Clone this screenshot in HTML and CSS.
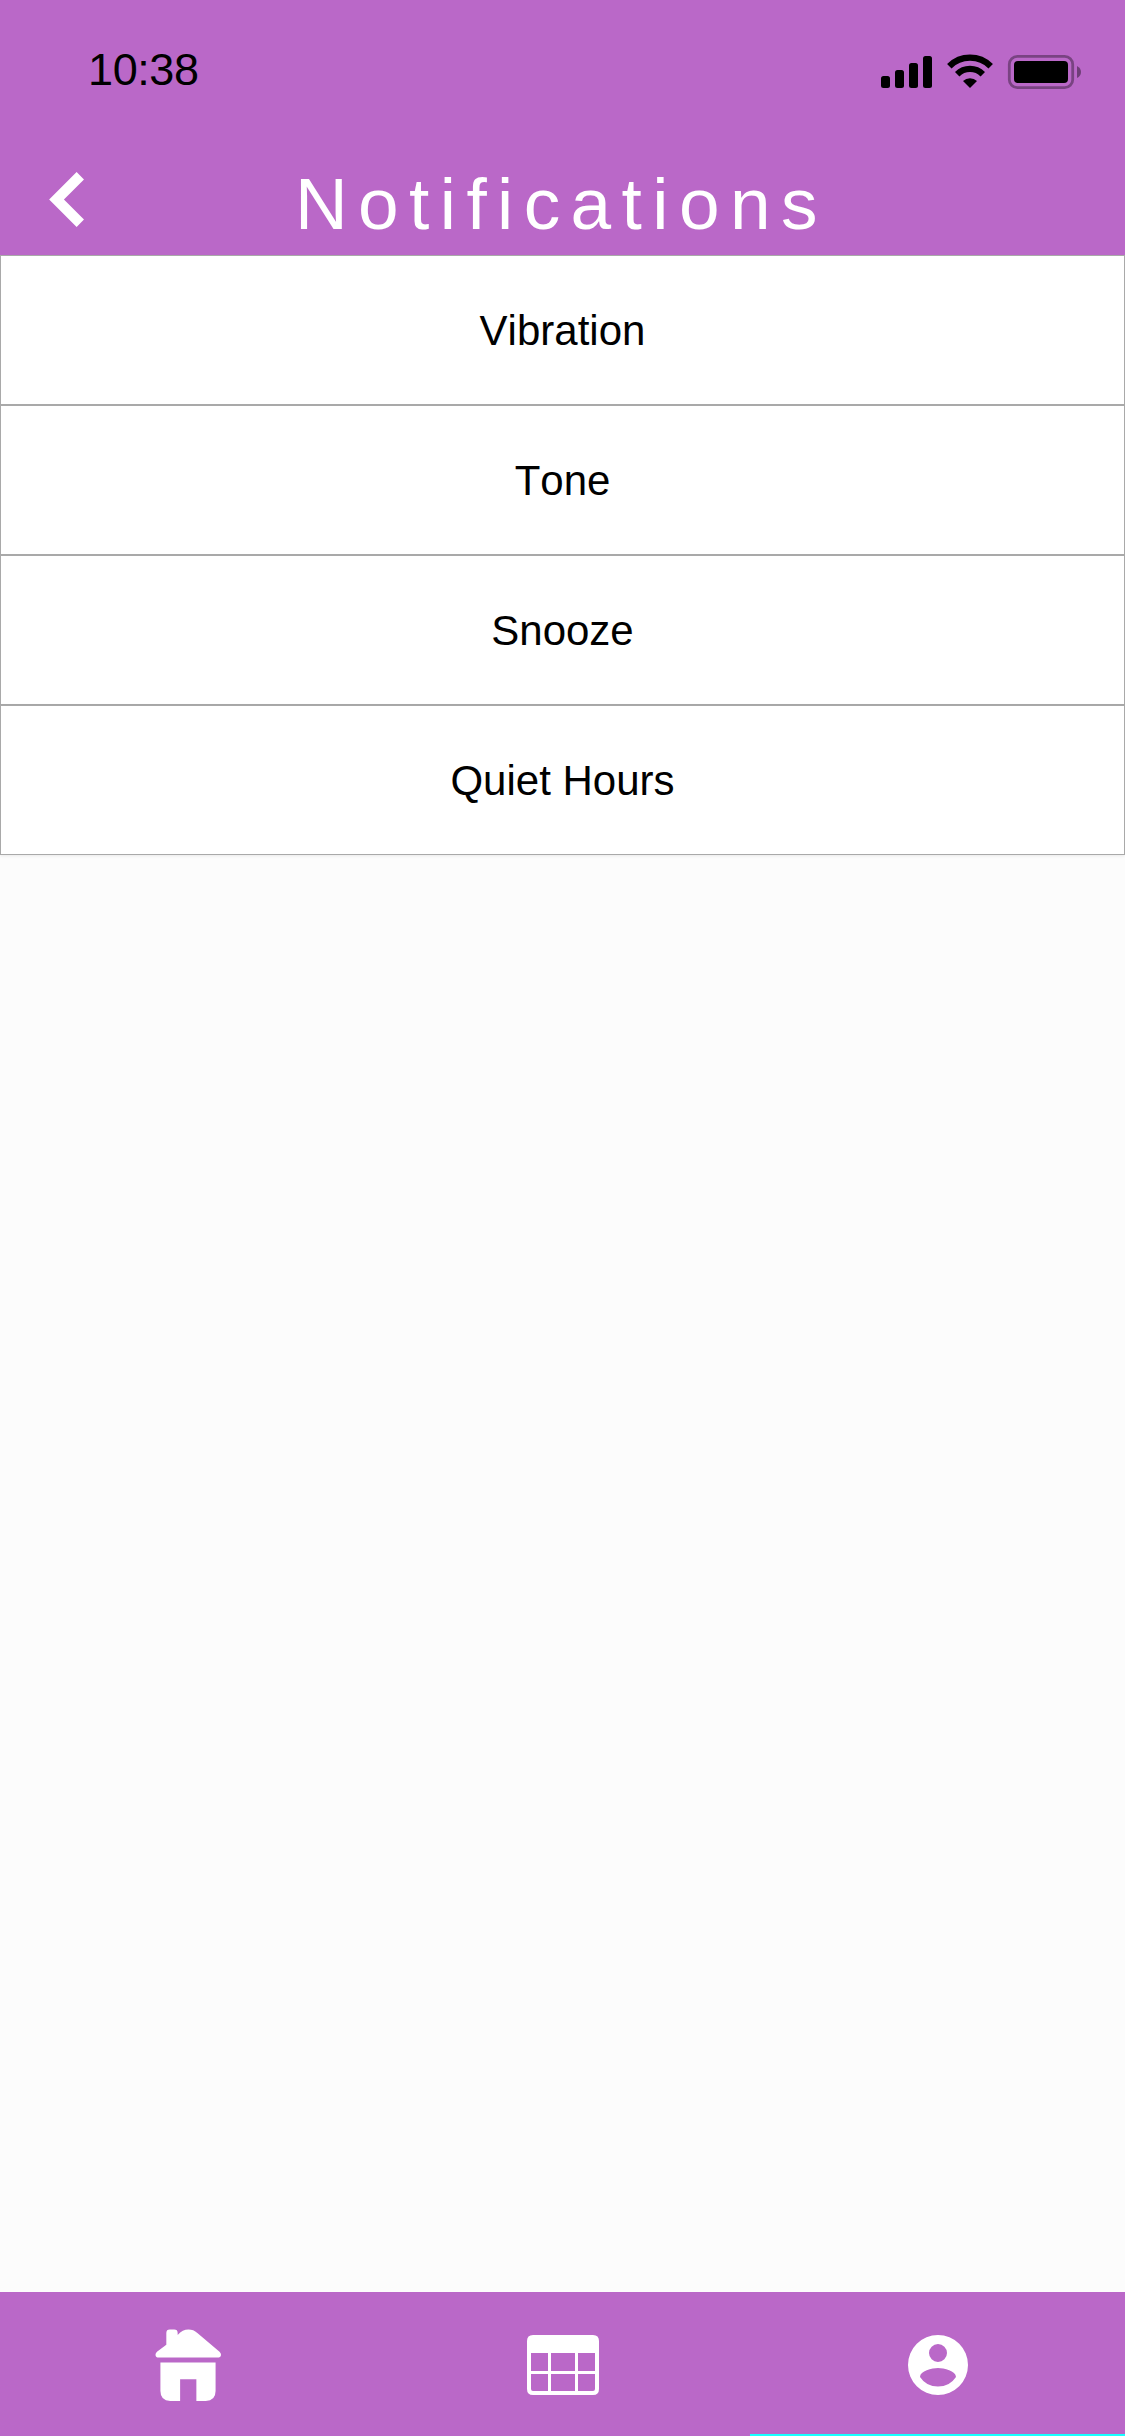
FILE: index.html
```html
<!DOCTYPE html>
<html lang="en">
<head>
<meta charset="utf-8">
<title>Notifications</title>
<link rel="stylesheet" href="styles.css">
</head>
<body>
<div class="screen">
  <header class="header">
    <div class="status">
      <span class="time">10:38</span>
      <svg class="status-icons" width="202" height="36" viewBox="0 0 202 36" aria-hidden="true">
        <rect x="1" y="22" width="9" height="12" rx="2.5"/>
        <rect x="15" y="16" width="9" height="18" rx="2.5"/>
        <rect x="29" y="9" width="9" height="25" rx="2.5"/>
        <rect x="43" y="2" width="9" height="32" rx="2.5"/>
        <g fill="none" stroke="#000">
          <path d="M69.300 12.200a29.300 29.300 0 0 1 41.400 0" stroke-width="6.300"/>
          <path d="M77.200 20.200a18.200 18.200 0 0 1 25.600 0" stroke-width="6.300"/>
        </g>
        <path d="M90 34l-7-7a10.500 10.500 0 0 1 14 0z"/>
        <rect x="129.300" y="2.300" width="63.400" height="31.400" rx="8" fill="none" stroke="#000" stroke-opacity=".35" stroke-width="2.800"/>
        <rect x="134" y="7" width="54" height="22" rx="4"/>
        <path d="M197 12q4 2 4 6t-4 6z" fill-opacity=".4"/>
      </svg>
    </div>
    <div class="titlebar">
      <svg class="back" width="36" height="57" viewBox="0 0 36 57" aria-label="Back">
        <path d="M31.300 4.700L7.500 28.500l23.800 23.800" fill="none" stroke="#fff" stroke-width="10.400"/>
      </svg>
      <h1 class="title">Notifications</h1>
    </div>
  </header>
  <main class="list">
    <div class="row">Vibration</div>
    <div class="row">Tone</div>
    <div class="row">Snooze</div>
    <div class="row">Quiet Hours</div>
  </main>
  <nav class="tabs">
    <div class="tab">
      <svg width="66" height="72" viewBox="0 0 67 73" aria-label="Home">
        <path d="M11.500 16V4q0-3.500 3.500-3.500h4.500q3.500 0 3.500 3.500v2q5-5.500 11-5.500 5 0 9 3.500l22.500 19q1.500 1.300 1.500 3 0 3-4 3H4q-3.500 0-3.500-3 0-1.700 1.500-3z"/>
        <path d="M5.500 34h56v29q0 10-10 10h-9.500V51H25.500v22H15.500q-10 0-10-10z"/>
      </svg>
    </div>
    <div class="tab">
      <svg width="72" height="60" viewBox="0 0 72 60" aria-label="Calendar">
        <path fill-rule="evenodd" d="M6 0h60q6 0 6 6v48q0 6-6 6H6q-6 0-6-6V6q0-6 6-6zM4 18v18h17V18zM24 18v18h24V18zM51 18v18h17V18zM4 39v15q0 2 2 2h15V39zM24 39v17h24V39zM51 39v17h15q2 0 2-2V39z"/>
      </svg>
    </div>
    <div class="tab active">
      <svg width="60" height="60" viewBox="0 0 60 60" aria-label="Profile">
        <path fill-rule="evenodd" d="M30 0a30 30 0 1 0 0 60 30 30 0 0 0 0-60zM30 9a9 9 0 1 1 0 18 9 9 0 0 1 0-18zM30 51.600a21.600 21.600 0 0 1-18-9.660C12.100 36 24 33 30 33s17.900 3 18 8.940a21.600 21.600 0 0 1-18 9.660z"/>
      </svg>
    </div>
  </nav>
</div>
</body>
</html>
```
FILE: styles.css
```css
* {
  box-sizing: border-box;
}

body {
  margin: 0;
  color: #000;
  font-family: "Liberation Sans", Arial, sans-serif;
  font-kerning: none;
}

.screen {
  display: flex;
  flex-direction: column;
  height: 2436px;
  background: #fcfcfc;
}

.header {
  height: 255px;
  background: #ba68c8;
}

.status {
  display: flex;
  align-items: center;
  justify-content: space-between;
  height: 144px;
  padding: 0 43px 4px 88px;
}

.time {
  font-size: 45px;
  letter-spacing: -.4px;
}

.status-icons {
  margin-top: 4px;
}

.titlebar {
  display: flex;
  align-items: center;
  height: 111px;
  padding-left: 49px;
}

.title {
  margin: 8px 0 0 210px;
  color: #fff;
  font-size: 73px;
  font-weight: 400;
  letter-spacing: 10.4px;
  line-height: 84px;
}

.list {
  flex: 1;
}

.row {
  display: flex;
  align-items: center;
  justify-content: center;
  height: 150px;
  padding-top: 2px;
  border: 1px solid #a9a9a9;
  background: #fff;
  font-size: 42px;
}

.row:last-child {
  box-shadow: 0 1px 3px rgba(0, 0, 0, .08);
}

.tabs {
  display: flex;
  height: 144px;
  background: #ba68c8;
}

.tab {
  display: flex;
  flex: 1;
  align-items: center;
  justify-content: center;
  padding-top: 4px;
  border-bottom: 2px solid transparent;
  fill: #fff;
}

.active {
  border-bottom-color: #18ffff;
}
```
